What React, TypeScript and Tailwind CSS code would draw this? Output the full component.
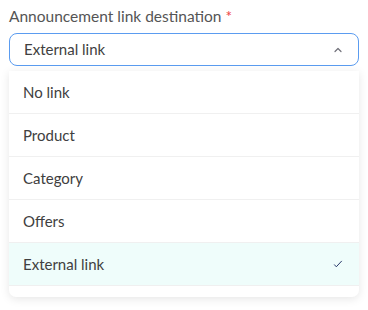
import React from 'react';

const options = ['No link', 'Product', 'Category', 'Offers', 'External link'];

const App: React.FC = () => {
  const selected = 'External link';

  return (
    <div className="w-[368px] h-[310px] bg-white px-[9px] pt-[5px] text-[#404040]" style={{ fontFamily: 'Lato, "Noto Sans", sans-serif' }}>
      <label className="block text-[15.5px] leading-[22px] text-[#555555]">
        Announcement link destination <span className="text-[#ef4444]">*</span>
      </label>
      <div className="mt-[6px] h-[33px] flex items-center justify-between rounded-[8px] border border-[#5b9cf0] pl-[14px] pr-[14px]">
        <span className="text-[15px] text-[#404040]">{selected}</span>
        <svg width="12" height="12" viewBox="0 0 12 12" fill="none" className="text-[#71717a]">
          <path d="M3 7.5 6 4.5 9 7.5" stroke="currentColor" strokeWidth="1.2" strokeLinecap="round" strokeLinejoin="round" />
        </svg>
      </div>
      <div className="mt-[5px] bg-white rounded-b-[7px] shadow-[0_2px_10px_rgba(0,0,0,0.10)] pb-[11px]">
        {options.map(o => (
          <div
            key={o}
            className={`h-[43px] flex items-center justify-between pl-[14px] pr-[16px] border-b border-[#f0f0f0] text-[15px] ${o === selected ? 'bg-[#effdfb]' : ''}`}
          >
            <span>{o}</span>
            {o === selected && (
              <svg width="10" height="10" viewBox="0 0 10 10" fill="none">
                <path d="M1.5 5.8 3.3 7.8 8.5 2.2" stroke="#2a3a6b" strokeWidth="1" strokeLinecap="round" strokeLinejoin="round" />
              </svg>
            )}
          </div>
        ))}
      </div>
    </div>
  );
};

export default App;
